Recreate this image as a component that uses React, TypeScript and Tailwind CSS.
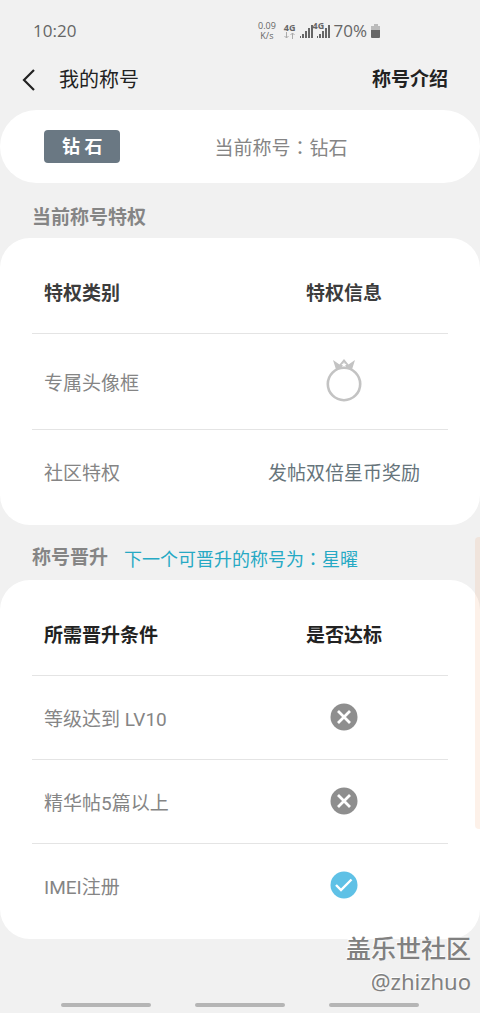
import React from 'react';
import { clsx } from 'clsx';

interface Column {
    title: string;
    subtitle: string;
}

interface Condition {
    label: string;
    met: boolean;
}

const columns: Record<'perks' | 'upgrade', Column> = {
    perks: { title: '特权类别', subtitle: '特权信息' },
    upgrade: { title: '所需晋升条件', subtitle: '是否达标' },
};

const conditions: Condition[] = [
    { label: '等级达到 LV10', met: false },
    { label: '精华帖5篇以上', met: false },
    { label: 'IMEI注册', met: true },
];

function Signal() {
    return (
        <svg width="13" height="14" viewBox="0 0 13 14" fill="#666">
            <path d="M0 12h1v2H0zM2 10h2v4H2zM5 7h2v7H5zM8 4h2v10H8zM11 1h2v13h-2z" />
        </svg>
    );
}

function StatusBar() {
    return (
        <div className="flex h-[54px] items-center pt-2 pr-[99px] pl-[33px] text-[17px] text-[#666]">
            <span className="flex-1 font-['Open_Sans',sans-serif]">10:20</span>
            <div className="flex items-center">
                <div className="mr-2 text-center font-['Open_Sans',sans-serif] text-[9px] leading-[10px]">
                    <div>0.09</div>
                    <div>K/s</div>
                </div>
                <div className="mr-1 flex flex-col items-center font-['Open_Sans',sans-serif] text-[9px] leading-[8px] font-bold">
                    <span>4G</span>
                    <svg width="11" height="7" viewBox="0 0 11 7" fill="none" stroke="#aaa">
                        <path d="M2.5 0v6M.5 4l2 2 2-2M8.5 7V1M6.5 3l2-2 2 2" />
                    </svg>
                </div>
                <Signal />
                <div className="relative ml-1">
                    <Signal />
                    <span className="absolute -top-1 -left-1 font-['Open_Sans',sans-serif] text-[9px] leading-[12px] font-bold">4G</span>
                </div>
                <span className="ml-1 font-['Open_Sans',sans-serif]">70%</span>
                <svg className="ml-1" width="10" height="14" viewBox="0 0 10 14">
                    <path d="M3 0h4v2h2v4H0V2h3z" fill="#bbb" />
                    <path d="M0 6h9v7q0 1-1 1H1q-1 0-1-1z" fill="#666" />
                </svg>
            </div>
        </div>
    );
}

function RingIcon() {
    return (
        <svg className="mx-auto" width="36" height="44" viewBox="0 0 36 44" role="img" aria-label="专属头像框">
            <circle cx="18" cy="25" r="16.200" fill="none" stroke="#c3c3c3" strokeWidth="2.600" />
            <path d="M7 1l6.500 4.500L18 0l4.500 5.500L29 1l-3 9.500q-8-3-16 0z" fill="#c3c3c3" />
            <path d="M18 3l.8 1.700 1.900.2-1.400 1.300.4 1.900-1.700-.9-1.700.9.4-1.900-1.400-1.300 1.900-.2z" fill="#fff" />
        </svg>
    );
}

function ResultIcon({ met }: { met: boolean }) {
    return (
        <svg className="mx-auto" width="28" height="28" viewBox="0 0 28 28" fill="none" role="img" aria-label={met ? '已达标' : '未达标'}>
            <circle cx="14" cy="14" r="13.500" fill={met ? '#5fc1e6' : '#8e8e8e'} />
            {met ? (
                <path d="M6 14l5 5L21.500 8.500" stroke="#fff" strokeWidth="2.400" />
            ) : (
                <path d="M8 8l12 12M20 8L8 20" stroke="#fff" strokeWidth="2.800" />
            )}
        </svg>
    );
}

function Card({ head, dark, children }: { head: Column; dark?: boolean; children: React.ReactNode }) {
    return (
        <div className="rounded-[30px] bg-white px-8 py-3">
            <table className="w-full table-fixed text-[19px] text-[#858585]">
                <thead className={clsx('font-bold', dark ? 'text-[#222]' : 'text-[#3c3c3c]')}>
                    <tr className="border-b border-[#e4e4e4]">
                        <th className="h-[83px] pt-1.5 pl-3 text-left">{head.title}</th>
                        <th className="pt-1.5">{head.subtitle}</th>
                    </tr>
                </thead>
                <tbody>{children}</tbody>
            </table>
        </div>
    );
}

export default function App() {
    return (
        <div className="relative flex min-h-screen flex-col overflow-hidden bg-[#f1f1f1] font-[Roboto,'Noto_Sans_CJK_SC',sans-serif]">
            <StatusBar />

            <header className="flex h-14 items-center pr-8 pl-5 pb-1">
                <button aria-label="返回" className="mr-5">
                    <svg width="19" height="22" viewBox="0 0 19 22" fill="none" stroke="#222" strokeWidth="2.200">
                        <path d="M14 1L4 11l10 10" />
                    </svg>
                </button>
                <h1 className="flex-1 text-[20px] text-[#222]">我的称号</h1>
                <a href="#intro" className="text-[19px] font-bold text-[#222]">称号介绍</a>
            </header>

            <main>
                {/* Current title */}
                <div className="flex h-[73px] items-center rounded-full bg-white px-11">
                    <span className="rounded bg-[#6a7883] px-[18px] text-[18px] leading-[33px] font-bold text-white">钻 石</span>
                    <p className="flex-1 pt-1 pl-[94px] text-[19px] text-[#858585]">
                        当前称号<span className="font-['Noto_Sans_CJK_TC',sans-serif]">：</span>钻石
                    </p>
                </div>

                <h2 className="flex h-[55px] items-center px-8 pt-4 text-[19px] font-bold text-[#858585]">当前称号特权</h2>
                <Card head={columns.perks}>
                    <tr className="border-b border-[#e4e4e4]">
                        <td className="h-24 pt-1.5 pl-3">专属头像框</td>
                        <td><RingIcon /></td>
                    </tr>
                    <tr>
                        <td className="h-[84px] pt-1.5 pl-3">社区特权</td>
                        <td className="pt-1.5 text-center whitespace-nowrap text-[#66747b]">发帖双倍星币奖励</td>
                    </tr>
                </Card>

                <div className="flex h-[55px] items-center gap-4 px-8 pt-3">
                    <h2 className="text-[19px] font-bold text-[#858585]">称号晋升</h2>
                    <p className="text-[18px] text-[#26a9c4]">
                        下一个可晋升的称号为<span className="font-['Noto_Sans_CJK_TC',sans-serif]">：</span>星曜
                    </p>
                </div>
                <Card head={columns.upgrade} dark>
                    {conditions.map(({ label, met }) => (
                        <tr key={label} className="border-b border-[#e4e4e4] last:border-b-0">
                            <td className="h-[84px] pt-1.5 pl-3">{label}</td>
                            <td><ResultIcon met={met} /></td>
                        </tr>
                    ))}
                </Card>
            </main>

            {/* Edge panel handle */}
            <div className="absolute top-[537px] -right-1 h-[292px] w-[9px] rounded bg-[#f07828]/10" />

            {/* Watermark */}
            <div className="absolute right-[9px] bottom-[18px] text-right text-[#808080] [text-shadow:-1px_-1px_0_#fff]">
                <div className="text-[25px] leading-[34px] font-medium">盖乐世社区</div>
                <div className="font-['Noto_Sans',sans-serif] text-[22px] leading-[28px]">@zhizhuo</div>
            </div>

            <div className="mt-auto flex justify-center gap-11 pb-[6px]">
                <div className="h-1 w-[90px] rounded-full bg-[#b5b5b5]" />
                <div className="h-1 w-[90px] rounded-full bg-[#b5b5b5]" />
                <div className="h-1 w-[90px] rounded-full bg-[#b5b5b5]" />
            </div>
        </div>
    );
}
